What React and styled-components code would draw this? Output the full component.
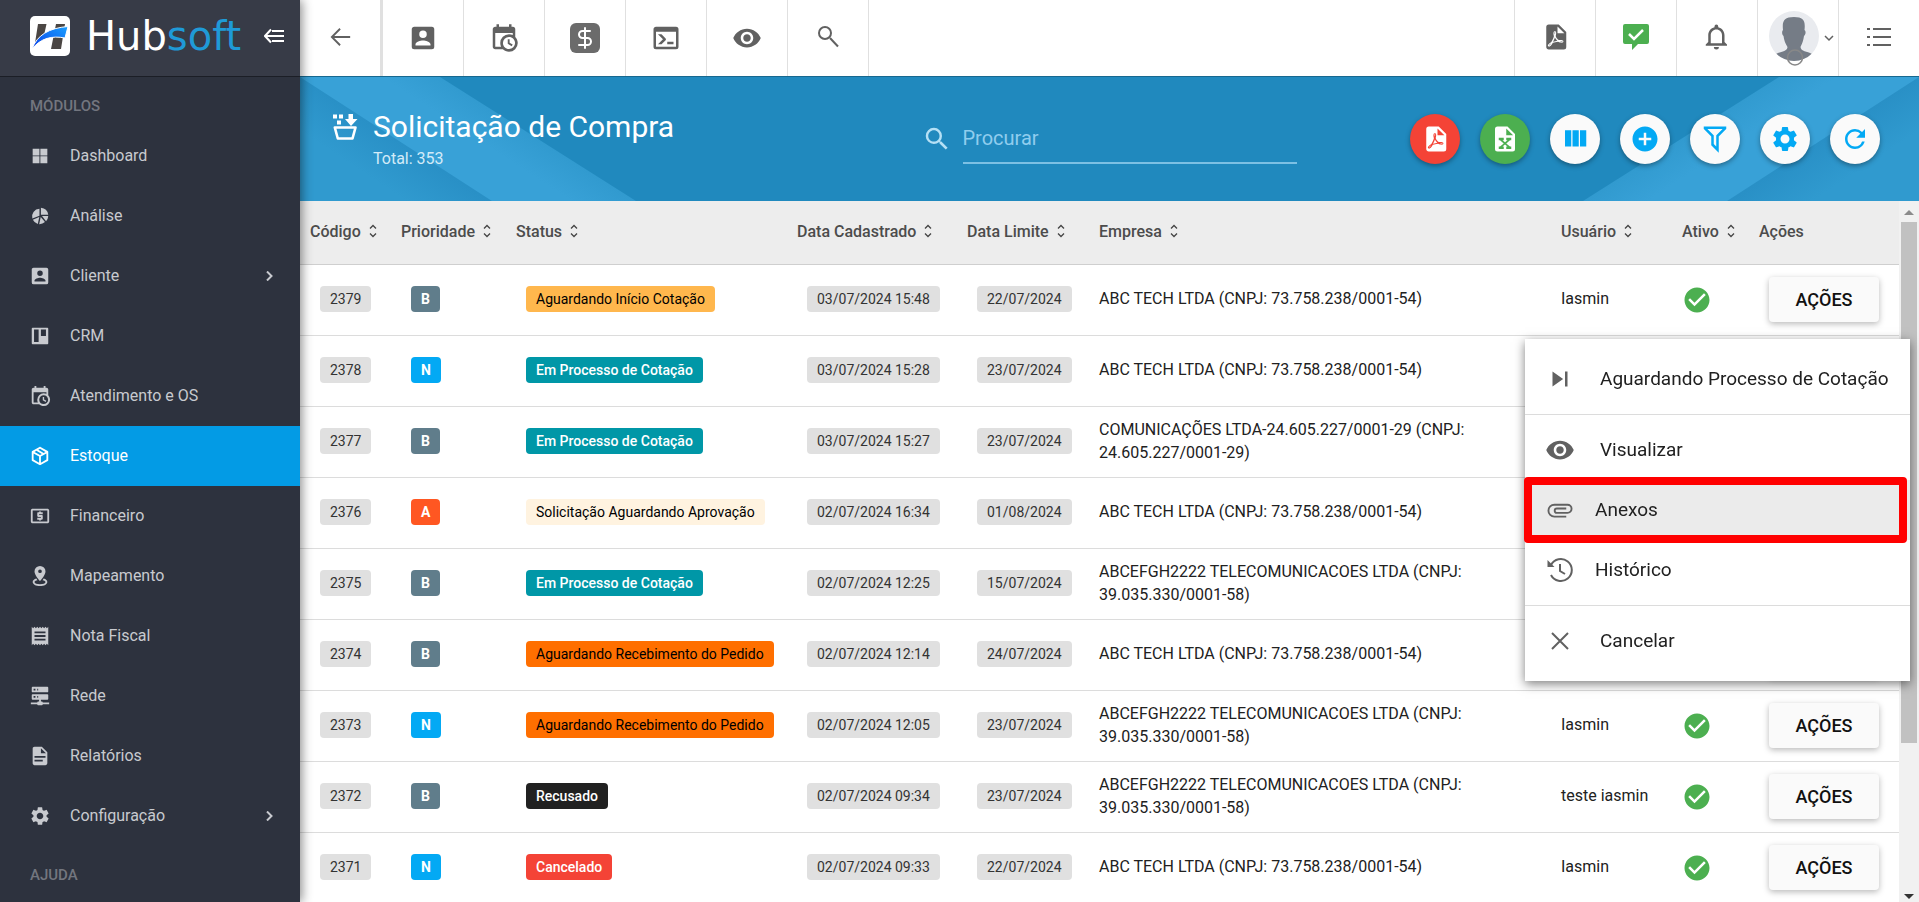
import React from 'react'
import styled, { createGlobalStyle, css } from 'styled-components'
import { DollarSign } from 'lucide-react'
import {
  MdLocalAtm,
  MdReceipt,
  MdSettings,
  MdVisibility,
  MdAddCircle,
  MdRefresh,
  MdSearch,
  MdSkipNext,
  MdCheckCircle,
} from 'react-icons/md'

const GlobalStyle = createGlobalStyle`
  * { box-sizing: border-box; }
  body {
    margin: 0;
    font-family: Roboto, "Noto Sans", sans-serif;
    font-size: 16px;
    color: #212121;
    background: #fff;
  }
  button, input { font-family: inherit; }
  svg { display: block; flex: none; }
`

/* icons */

const paths = {
  account:
    'M6,17C6,15 10,13.9 12,13.9C14,13.9 18,15 18,17V18H6M15,9A3,3 0 0,1 12,12A3,3 0 0,1 9,9A3,3 0 0,1 12,6A3,3 0 0,1 15,9M3,5V19A2,2 0 0,0 5,21H19A2,2 0 0,0 21,19V5A2,2 0 0,0 19,3H5C3.89,3 3,3.9 3,5Z',
  grid: 'M4,4H11.4V11.4H4ZM12.4,4H20V11.4H12.4ZM4,12.4H11.4V20H4ZM12.4,12.4H20V20H12.4Z',
  pie: 'M13,3A9,9 0 0,1 21,10.5H13ZM21,12A9,9 0 0,1 18.6,17.6L14.2,12ZM11.4,4.2V11.6L3.6,14.8A8.4,8.4 0 0,1 11.4,4.2ZM4.2,16L11.2,13L9.6,20.6A9,9 0 0,1 4.2,16ZM12.8,13L17.4,18.6A9,9 0 0,1 11.1,20.9Z',
  board:
    'M4,3H20A1,1 0 0,1 21,4V20A1,1 0 0,1 20,21H4A1,1 0 0,1 3,20V4A1,1 0 0,1 4,3M5.5,5V18.5H10.5V5H5.5M13,5V12H18.5V5H13Z',
  calendar:
    'M15,13H16.5V15.82L18.94,17.23L18.19,18.53L15,16.69V13M19,8H5V19H9.67C9.24,18.09 9,17.07 9,16A7,7 0 0,1 16,9C17.07,9 18.09,9.24 19,9.67V8M5,21C3.89,21 3,20.1 3,19V5C3,3.89 3.89,3 5,3H6V1H8V3H16V1H18V3H19A2,2 0 0,1 21,5V11.1C22.24,12.36 23,14.09 23,16A7,7 0 0,1 16,23C14.09,23 12.36,22.24 11.1,21H5M16,11.15A4.85,4.85 0 0,0 11.15,16C11.15,18.68 13.32,20.85 16,20.85A4.85,4.85 0 0,0 20.85,16C20.85,13.32 18.68,11.15 16,11.15Z',
  box: 'M21,16.5C21,16.88 20.79,17.21 20.47,17.38L12.57,21.82C12.41,21.94 12.21,22 12,22C11.79,22 11.59,21.94 11.43,21.82L3.53,17.38C3.21,17.21 3,16.88 3,16.5V7.5C3,7.12 3.21,6.79 3.53,6.62L11.43,2.18C11.59,2.06 11.79,2 12,2C12.21,2 12.41,2.06 12.57,2.18L20.47,6.62C20.79,6.79 21,7.12 21,7.5V16.5M12,4.15L10.11,5.22L16,8.61L17.96,7.5L12,4.15M6.04,7.5L12,10.85L13.96,9.75L8.08,6.35L6.04,7.5M5,15.91L11,19.29V12.58L5,9.21V15.91M19,15.91V9.21L13,12.58V19.29L19,15.91Z',
  marker:
    'M12,1A6,6 0 0,1 18,7C18,11 12,17.5 12,17.5C12,17.5 6,11 6,7A6,6 0 0,1 12,1M12,4.8A2,2 0 0,0 10,6.8A2,2 0 0,0 12,8.8A2,2 0 0,0 14,6.8A2,2 0 0,0 12,4.8M20,18.5C20,21 16.4,23 12,23C7.6,23 4,21 4,18.5C4,16.8 5.6,15.4 8,14.7L9.2,16.5C7.3,16.9 6,17.7 6,18.5C6,19.9 8.7,21 12,21C15.3,21 18,19.9 18,18.5C18,17.7 16.7,16.9 14.8,16.5L16,14.7C18.4,15.4 20,16.8 20,18.5Z',
  server:
    'M13,18H14A1,1 0 0,1 15,19H22V21H15A1,1 0 0,1 14,22H10A1,1 0 0,1 9,21H2V19H9A1,1 0 0,1 10,18H11V16H4A1,1 0 0,1 3,15V11A1,1 0 0,1 4,10H20A1,1 0 0,1 21,11V15A1,1 0 0,1 20,16H13V18M4,2H20A1,1 0 0,1 21,3V7A1,1 0 0,1 20,8H4A1,1 0 0,1 3,7V3A1,1 0 0,1 4,2M9,6H10V4H9V6M9,14H10V12H9V14M5,4V6H7V4H5M5,12V14H7V12H5Z',
  doc: 'M13,9H18.5L13,3.5V9M6,2H14L20,8V20A2,2 0 0,1 18,22H6C4.89,22 4,21.1 4,20V4C4,2.89 4.89,2 6,2M15,18V16H6V18H15M18,14V12H6V14H18Z',
  pdf: 'M14,9H19.5L14,3.5V9M7,2H15L21,8V20A2,2 0 0,1 19,22H7C5.89,22 5,21.1 5,20V4A2,2 0 0,1 7,2M11.93,12.44C12.34,13.34 12.86,14.08 13.46,14.59L13.87,14.91C13,15.07 11.8,15.35 10.53,15.84V15.84L10.42,15.88L10.92,14.84C11.37,13.97 11.7,13.18 11.93,12.44M18.41,16.25C18.59,16.07 18.68,15.84 18.69,15.59C18.72,15.39 18.67,15.2 18.57,15.04C18.28,14.57 17.53,14.35 16.29,14.35L15,14.42L14.13,13.84C13.5,13.32 12.93,12.41 12.53,11.28L12.57,11.14C12.9,9.81 13.21,8.2 12.55,7.54C12.39,7.38 12.17,7.3 11.94,7.3H11.7C11.33,7.3 11,7.69 10.91,8.07C10.54,9.4 10.76,10.13 11.13,11.34V11.35C10.88,12.23 10.56,13.25 10.05,14.28L9.09,16.08L8.2,16.57C7,17.32 6.43,18.16 6.32,18.69C6.28,18.88 6.3,19.05 6.37,19.23L6.4,19.28L6.88,19.59L7.32,19.7C8.13,19.7 9.05,18.75 10.29,16.63L10.47,16.56C11.5,16.23 12.78,16 14.5,15.81C15.53,16.32 16.74,16.55 17.5,16.55C17.94,16.55 18.24,16.44 18.41,16.25M18,15.54L18.09,15.65C18.08,15.75 18.05,15.76 18,15.78H17.96L17.77,15.8C17.31,15.8 16.6,15.61 15.87,15.29C15.96,15.19 16,15.19 16.1,15.19C17.5,15.19 17.9,15.44 18,15.54M8.83,17C8.18,18.19 7.59,18.85 7.14,19C7.19,18.62 7.64,17.96 8.35,17.31L8.83,17M11.85,10.09C11.62,9.19 11.61,8.46 11.78,8.04L11.85,7.92L12,7.97C12.17,8.21 12.19,8.53 12.09,9.07L12.06,9.23L11.9,10.05L11.85,10.09Z',
  excel:
    'M6,2H14L20,8V20A2,2 0 0,1 18,22H6A2,2 0 0,1 4,20V4A2,2 0 0,1 6,2M13,3.5V9H18.5L13,3.5M17,11H13V13H14L12,14.67L10,13H11V11H7V13H8L11,15.5L8,18H7V20H11V18H10L12,16.33L14,18H13V20H17V18H16L13,15.5L16,13H17V11Z',
  columns: 'M16,5V18H21V5M4,18H9V5H4M10,18H15V5H10V18Z',
  filter:
    'M3,2H21V4H20.92L15,9.92V22.91L9,16.91V9.91L3.09,4H3V2M11,16.08L13,18.08V9H13.09L18.09,4H5.92L10.92,9H11V16.08Z',
  console:
    'M20,19V7H4V19H20M20,3A2,2 0 0,1 22,5V19A2,2 0 0,1 20,21H4A2,2 0 0,1 2,19V5C2,3.89 2.9,3 4,3H20M13,17V15H18V17H13M9.58,13L5.57,9H8.4L11.7,12.3C12.09,12.69 12.09,13.33 11.7,13.72L8.42,17H5.59L9.58,13Z',
  bell: 'M16,17H7V10.5C7,8 9,6 11.5,6C14,6 16,8 16,10.5M18,16V10.5C18,7.43 15.86,4.86 13,4.18V3.5A1.5,1.5 0 0,0 11.5,2A1.5,1.5 0 0,0 10,3.5V4.18C7.13,4.86 5,7.43 5,10.5V16L3,18V19H20V18M11.5,22A2,2 0 0,0 13.5,20H9.5A2,2 0 0,0 11.5,22Z',
  clip: 'M7.5,18A5.5,5.5 0 0,1 2,12.5A5.5,5.5 0 0,1 7.5,7H18A4,4 0 0,1 22,11A4,4 0 0,1 18,15H9.5A2.5,2.5 0 0,1 7,12.5A2.5,2.5 0 0,1 9.5,10H17V11.5H9.5A1,1 0 0,0 8.5,12.5A1,1 0 0,0 9.5,13.5H18A2.5,2.5 0 0,0 20.5,11A2.5,2.5 0 0,0 18,8.5H7.5A4,4 0 0,0 3.5,12.5A4,4 0 0,0 7.5,16.5H17V18H7.5Z',
}

const Icon = ({ name, size = 22 }) => (
  <svg width={size} height={size} viewBox="0 0 24 24" fill="currentColor" fillRule="evenodd" aria-hidden="true">
    <path d={paths[name]} />
  </svg>
)

const Line = ({ d, size = 24, w = 2, box = 24, children }) => (
  <svg width={size} height={size} viewBox={`0 0 ${box} ${box}`} fill="none" stroke="currentColor" strokeWidth={w} aria-hidden="true">
    <path d={d} />
    {children}
  </svg>
)

const SortIcon = () => (
  <svg width="8" height="14" viewBox="0 0 8 14" fill="none" stroke="#444" strokeWidth="1.3" aria-hidden="true">
    <path d="M1 4.5L4 1.5L7 4.5M1 9.5L4 12.5L7 9.5" />
  </svg>
)

const LogoMark = () => (
  <svg width="40" height="40" viewBox="0 0 40 40" aria-hidden="true">
    <defs>
      <linearGradient id="swoosh" x1="0" y1="1" x2="1" y2="0">
        <stop offset="0" stopColor="#0a3fe8" />
        <stop offset="1" stopColor="#1aa0ff" />
      </linearGradient>
    </defs>
    <rect width="40" height="40" rx="5" fill="#fff" />
    <path d="M8 8H16.500L13 24L5 27ZM26 8H35L31 33H21Z" fill="#4b4643" />
    <path d="M2 33C7 19 19 12 38 10.500L35 22C22 19.500 11 22 2 33Z" fill="url(#swoosh)" stroke="#fff" strokeWidth="1" />
  </svg>
)

const BasketIcon = () => (
  <svg width="25" height="26" viewBox="0 0 25 26" fill="#fff" aria-hidden="true">
    <path d="M0 0.500H4V4.500H0ZM6 0.500H10V4.500H6ZM4 6.500H8V10.500H4ZM15.500 0H20V5H24.500L18 12L12 5H15.500Z" />
    <path d="M1.800 13.500H22.500L19.500 24.500H4.800Z" fill="none" stroke="#fff" strokeWidth="2.600" strokeLinejoin="round" />
  </svg>
)

const AvatarPicture = () => (
  <svg width="50" height="55" viewBox="0 0 50 55" aria-hidden="true">
    <clipPath id="face"><circle cx="25" cy="25" r="25" /></clipPath>
    <g clipPath="url(#face)">
      <rect width="50" height="50" fill="#e9ebef" />
      <path d="M7 43C12 40 18 41 18.500 36C16.500 33 15 29 14.500 25C12.500 23 13 20 14 19C13 10 15 6 25 6C35 6 36.500 10 35.500 19C37 20 37 23 35 25C34.500 29 33 33 31.500 36C32 41 38 40 43 43L38 53H12Z" fill="#757c86" />
    </g>
    <path d="M19 50H33A7 7 0 0 1 19 50Z" fill="#fff" />
    <circle cx="26" cy="46.500" r="7.500" fill="none" stroke="#888" strokeWidth="1.500" />
  </svg>
)

/* layout */

const Page = styled.div`
  display: grid;
  grid-template-columns: 300px minmax(0, 1fr);
  height: 100vh;
  overflow: hidden;
`

const Sidebar = styled.aside`
  z-index: 2;
  background: #2d323e;
  color: #c8cacf;
  overflow: hidden;
  box-shadow: 2px 0 10px rgba(0, 0, 0, 0.45);
`

const Brand = styled.div`
  display: flex;
  align-items: center;
  height: 77px;
  padding: 0 16px 4px 30px;
  background: #373b47;
  border-bottom: 1px solid #1b1e26;
  color: #fff;
`

const BrandName = styled.span`
  flex: 1;
  margin-left: 16px;
  font: 40px/40px "DejaVu Sans", sans-serif;

  span { color: #1f9ad7; }
`

const PlainButton = styled.button`
  display: flex;
  padding: 0;
  border: 0;
  background: none;
  color: inherit;
  cursor: pointer;
`

const NavTitle = styled.h2`
  margin: 0;
  padding: 19px 30px 10px;
  font-size: 15px;
  line-height: 20px;
  font-weight: 500;
  color: #73767f;
`

const NavItem = styled.a`
  display: flex;
  align-items: center;
  height: 60px;
  padding: 0 25px 0 29px;
  color: ${(p) => (p.$active ? '#fff' : 'inherit')};
  background: ${(p) => (p.$active ? '#039be5' : 'transparent')};
  text-decoration: none;

  span {
    flex: 1;
    margin-left: 19px;
    padding-bottom: 2px;
  }
`

const Main = styled.main`
  display: flex;
  flex-direction: column;
  min-width: 0;
  min-height: 0;
`

const Topbar = styled.header`
  display: flex;
  justify-content: space-between;
  flex: none;
  height: 76px;
  background: #fff;
  color: #616161;
`

const Tools = styled.div`
  display: flex;
`

const Tool = styled.button`
  display: flex;
  align-items: center;
  justify-content: center;
  gap: 5px;
  width: 81px;
  padding: 0;
  border: solid #e0e0e0;
  border-width: 0 1px 0 0;
  background: none;
  color: ${(p) => p.$color || 'inherit'};
`

const BackTool = styled(Tool)`
  width: 83px;
  padding: 0 0 2px 2px;
  border-right-width: 3px;
`

const EndTool = styled(Tool)`
  padding-bottom: 2px;
  border-width: 0 0 0 1px;
`

const UserTool = styled(EndTool)`
  padding: 0 0 0 6px;
`

const MoneyBox = styled.span`
  display: flex;
  padding: 3px;
  border-radius: 6px;
  background: #6b6b6b;
  color: #fff;
`

const Banner = styled.section`
  position: relative;
  display: grid;
  grid-template-columns: 1fr 380px 1fr;
  align-items: center;
  flex: none;
  height: 125px;
  padding: 0 39px 0 33px;
  background: #2089be;
  border-top: 1px solid #17688f;
  color: #fff;
`

const Rays = styled.svg`
  position: absolute;
  top: 0;
  ${(p) => (p.$flip ? css`right: 0; transform: scaleX(-1);` : css`left: 0;`)}
`

const Heading = styled.div`
  position: relative;
  display: grid;
  grid-template-columns: 25px auto;
  column-gap: 15px;
  justify-content: start;
  align-items: center;
  padding-top: 2px;

  h1 {
    margin: 0;
    font-size: 30px;
    line-height: 36px;
    font-weight: 400;
  }
  p {
    grid-column: 2;
    margin: 0;
    padding-top: 2px;
    line-height: 24px;
    color: #d3ebf8;
  }
`

const Search = styled.label`
  position: relative;
  display: flex;
  align-items: center;
  gap: 11px;
  margin-left: 5px;
  color: #b5e0f5;

  input {
    flex: 1;
    min-width: 0;
    height: 50px;
    padding: 0;
    border: 0;
    border-bottom: 2px solid #7cc0e4;
    background: none;
    color: #fff;
    font-size: 20px;
    outline: 0;
  }
  input::placeholder { color: #90cdee; }
`

const Actions = styled.div`
  position: relative;
  display: flex;
  justify-content: flex-end;
  gap: 20px;
`

const RoundButton = styled.button`
  display: flex;
  align-items: center;
  justify-content: center;
  width: 50px;
  height: 50px;
  padding: 0;
  border: 0;
  border-radius: 50%;
  background: ${(p) => p.$bg || '#fafafa'};
  color: ${(p) => (p.$bg ? '#fff' : '#03a9f4')};
  box-shadow: 0 2px 5px rgba(0, 0, 0, 0.35);
`

const ListArea = styled.section`
  display: flex;
  flex: 1;
  min-height: 0;
`

const TableBox = styled.div`
  flex: 1;
  min-width: 0;
  overflow: hidden;
`

const Table = styled.table`
  width: 100%;
  table-layout: fixed;
  border-collapse: collapse;

  th {
    height: 63px;
    padding: 0 0 2px 10px;
    background: #ededed;
    border-bottom: 1px solid #cfcfcf;
    color: #4c4c4c;
    font-weight: 500;
    text-align: left;
    white-space: nowrap;
  }
  td {
    height: 71px;
    padding: 0 10px 2px;
    border-bottom: 1px solid #dcdcdc;
    line-height: 23px;
  }
`

const Col = styled.col`
  width: ${(p) => p.$w};
`

const Sort = styled.span`
  display: inline-flex;
  align-items: center;
  gap: 8px;
`

const Badge = styled.span`
  display: inline-block;
  margin-left: 10px;
  padding: 0 10px;
  border-radius: 4px;
  font-size: 14px;
  line-height: 26px;
  font-weight: ${(p) => p.$weight || 400};
  white-space: nowrap;
  vertical-align: middle;
  background: ${(p) => p.$bg || '#e0e0e0'};
  color: ${(p) => p.$color || '#333'};
`

const ActiveMark = styled.span`
  display: block;
  padding-top: 2px;
  color: #4caf50;
`

const RowButton = styled.button`
  display: block;
  width: 110px;
  height: 45px;
  margin: 2px 0 0 10px;
  padding: 0;
  border: 0;
  border-radius: 4px;
  background: #fafafa;
  color: #111;
  font-size: 18px;
  font-weight: 500;
  box-shadow: 0 2px 6px rgba(0, 0, 0, 0.28);
`

const Scrollbar = styled.div`
  display: flex;
  flex-direction: column;
  align-items: center;
  flex: none;
  width: 20px;
  background: #f1f1f1;
`

const Thumb = styled.div`
  flex: 522;
  width: 16px;
  background: #c1c1c1;
`

const Track = styled.div`
  flex: 138;
`

const Arrow = styled.span`
  flex: none;
  height: 21px;
  padding-top: ${(p) => (p.$down ? '13px' : '9px')};

  &::before {
    content: '';
    display: block;
    border: solid transparent;
    border-width: ${(p) => (p.$down ? '5px 5px 0' : '0 5px 5px')};
    ${(p) => (p.$down ? 'border-top-color: #333;' : 'border-bottom-color: #8b8b8b;')}
  }
`

const Menu = styled.div`
  position: fixed;
  z-index: 3;
  top: 339px;
  right: 9px;
  width: 385px;
  padding: 10px 0;
  background: #fff;
  box-shadow: 0 3px 10px rgba(0, 0, 0, 0.5);

  hr {
    height: 1px;
    margin: 5px 0;
    border: 0;
    background: #dcdcdc;
  }
`

const MenuItem = styled.button`
  position: relative;
  display: flex;
  align-items: center;
  gap: ${(p) => (p.$tight ? '20px' : '25px')};
  width: 100%;
  height: 60px;
  padding: 0 20px;
  border: 0;
  background: ${(p) => (p.$marked ? '#ebebeb' : 'none')};
  color: #616161;
  font-size: 19px;
  text-align: left;

  span {
    padding-bottom: 2px;
    color: #212121;
    white-space: nowrap;
  }

  ${(p) =>
    p.$marked &&
    css`
      &::after {
        content: '';
        position: absolute;
        inset: -3px 3px -3px -1px;
        border: 8px solid #f00;
        border-radius: 4px;
      }
    `}
`

/* data */

const modules = [
  { label: 'Dashboard', icon: <Icon name="grid" /> },
  { label: 'Análise', icon: <Icon name="pie" /> },
  { label: 'Cliente', icon: <Icon name="account" />, more: true },
  { label: 'CRM', icon: <Icon name="board" /> },
  { label: 'Atendimento e OS', icon: <Icon name="calendar" /> },
  { label: 'Estoque', icon: <Icon name="box" />, active: true },
  { label: 'Financeiro', icon: <MdLocalAtm size={22} /> },
  { label: 'Mapeamento', icon: <Icon name="marker" /> },
  { label: 'Nota Fiscal', icon: <MdReceipt size={22} /> },
  { label: 'Rede', icon: <Icon name="server" /> },
  { label: 'Relatórios', icon: <Icon name="doc" /> },
  { label: 'Configuração', icon: <MdSettings size={22} />, more: true },
]

const priority = {
  B: '#607d8b',
  N: '#03a9f4',
  A: '#ff5722',
}

const status = {
  inicio: { label: 'Aguardando Início Cotação', bg: '#ffb74d', color: '#000' },
  processo: { label: 'Em Processo de Cotação', bg: '#0097a7', color: '#fff', weight: 500 },
  aprovacao: { label: 'Solicitação Aguardando Aprovação', bg: '#fff3e0', color: '#000' },
  recebimento: { label: 'Aguardando Recebimento do Pedido', bg: '#ff6f00', color: '#000' },
  recusado: { label: 'Recusado', bg: '#212121', color: '#fff', weight: 500 },
  cancelado: { label: 'Cancelado', bg: '#f44336', color: '#fff', weight: 500 },
}

const abc = 'ABC TECH LTDA (CNPJ: 73.758.238/0001-54)'
const tele = 'ABCEFGH2222 TELECOMUNICACOES LTDA (CNPJ: 39.035.330/0001-58)'
const com = 'COMUNICAÇÕES LTDA-24.605.227/0001-29 (CNPJ: 24.605.227/0001-29)'

const rows = [
  [2379, 'B', 'inicio', '03/07/2024 15:48', '22/07/2024', abc, 'Iasmin'],
  [2378, 'N', 'processo', '03/07/2024 15:28', '23/07/2024', abc, ''],
  [2377, 'B', 'processo', '03/07/2024 15:27', '23/07/2024', com, ''],
  [2376, 'A', 'aprovacao', '02/07/2024 16:34', '01/08/2024', abc, ''],
  [2375, 'B', 'processo', '02/07/2024 12:25', '15/07/2024', tele, ''],
  [2374, 'B', 'recebimento', '02/07/2024 12:14', '24/07/2024', abc, ''],
  [2373, 'N', 'recebimento', '02/07/2024 12:05', '23/07/2024', tele, 'Iasmin'],
  [2372, 'B', 'recusado', '02/07/2024 09:34', '23/07/2024', tele, 'teste iasmin'],
  [2371, 'N', 'cancelado', '02/07/2024 09:33', '22/07/2024', abc, 'Iasmin'],
]

const columns = [
  ['Código', '91px'],
  ['Prioridade', '115px'],
  ['Status', '281px'],
  ['Data Cadastrado', '170px'],
  ['Data Limite', '132px'],
  ['Empresa', 'auto'],
  ['Usuário', '121px'],
  ['Ativo', '77px'],
  ['Ações', '150px'],
]

const DiagonalRays = ({ flip }) => (
  <Rays $flip={flip} width="340" height="124" viewBox="0 0 340 124" aria-hidden="true">
    <defs>
      <linearGradient id={flip ? 'shadeR' : 'shadeL'} gradientUnits="userSpaceOnUse" x1="95" y1="62" x2="70" y2="100">
        <stop offset="0" stopColor="#2990c6" />
        <stop offset="1" stopColor="#309acf" />
      </linearGradient>
      <linearGradient id={flip ? 'bandR' : 'bandL'} gradientUnits="userSpaceOnUse" x1="24" y1="-38" x2="43" y2="-67">
        <stop offset="0" stopColor="#38a1d7" />
        <stop offset="1" stopColor="#319acf" />
      </linearGradient>
    </defs>
    <path d="M0 0H140L336 124H0Z" fill={`url(#${flip ? 'bandR' : 'bandL'})`} />
    <path d="M0 0L192 124H0Z" fill={`url(#${flip ? 'shadeR' : 'shadeL'})`} />
  </Rays>
)

const Side = () => (
  <Sidebar>
    <Brand>
      <LogoMark />
      <BrandName>Hub<span>soft</span></BrandName>
      <PlainButton aria-label="Recolher menu">
        <Line box={20} size={20} w={2} d="M7 3.500L1 10L7 16.500M2 10H20M8 5H20M8 15H20" />
      </PlainButton>
    </Brand>
    <nav>
      <NavTitle>MÓDULOS</NavTitle>
      {modules.map((m) => (
        <NavItem key={m.label} href="#" $active={m.active}>
          {m.icon}
          <span>{m.label}</span>
          {m.more && <Line box={10} size={10} w={2} d="M2 0.500L6.500 5L2 9.500" />}
        </NavItem>
      ))}
      <NavTitle>AJUDA</NavTitle>
    </nav>
  </Sidebar>
)

const Header = () => (
  <Topbar>
    <Tools>
      <BackTool aria-label="Voltar"><Line w={2} size={22} d="M11 3L2 12L11 21M2 12H22" /></BackTool>
      <Tool aria-label="Clientes"><Icon name="account" size={30} /></Tool>
      <Tool aria-label="Agenda"><Icon name="calendar" size={30} /></Tool>
      <Tool aria-label="Financeiro"><MoneyBox><DollarSign size={24} strokeWidth={2} /></MoneyBox></Tool>
      <Tool aria-label="Console"><Icon name="console" size={30} /></Tool>
      <Tool aria-label="Visualizar"><MdVisibility size={30} /></Tool>
      <Tool aria-label="Pesquisar">
        <Line size={24} w={2} d="M14 12L22 20.500"><circle cx="9" cy="7" r="6" /></Line>
      </Tool>
    </Tools>
    <Tools>
      <EndTool aria-label="PDF"><Icon name="pdf" size={30} /></EndTool>
      <EndTool $color="#4caf50" aria-label="Mensagens">
        <svg width="26" height="26" viewBox="0 0 26 26" aria-hidden="true">
          <path d="M2 0H24A2 2 0 0 1 26 2V18A2 2 0 0 1 24 20H15L9 26V20H2A2 2 0 0 1 0 18V2A2 2 0 0 1 2 0Z" fill="currentColor" />
          <path d="M6 10L11 15L20 6" fill="none" stroke="#fff" strokeWidth="2.500" />
        </svg>
      </EndTool>
      <EndTool aria-label="Notificações"><Icon name="bell" size={30} /></EndTool>
      <UserTool aria-label="Perfil">
        <AvatarPicture />
        <Line box={10} size={10} w={1.5} d="M1 3L5 7L9 3" />
      </UserTool>
      <EndTool aria-label="Menu">
        <Line size={24} w={2} d="M6 4H24M6 12H24M6 20H24M0 4H3M0 12H3M0 20H3" />
      </EndTool>
    </Tools>
  </Topbar>
)

const PageBanner = () => (
  <Banner>
    <DiagonalRays />
    <DiagonalRays flip />
    <Heading>
      <BasketIcon />
      <h1>Solicitação de Compra</h1>
      <p>Total: 353</p>
    </Heading>
    <Search>
      <MdSearch size={30} />
      <input type="text" placeholder="Procurar" aria-label="Procurar" />
    </Search>
    <Actions>
      <RoundButton $bg="#f44336" aria-label="Exportar PDF"><Icon name="pdf" size={30} /></RoundButton>
      <RoundButton $bg="#4caf50" aria-label="Exportar Excel"><Icon name="excel" size={30} /></RoundButton>
      <RoundButton aria-label="Colunas"><Icon name="columns" size={30} /></RoundButton>
      <RoundButton aria-label="Adicionar"><MdAddCircle size={30} /></RoundButton>
      <RoundButton aria-label="Filtrar"><Icon name="filter" size={30} /></RoundButton>
      <RoundButton aria-label="Configurar"><MdSettings size={30} /></RoundButton>
      <RoundButton aria-label="Atualizar"><MdRefresh size={30} /></RoundButton>
    </Actions>
  </Banner>
)

const Requests = () => (
  <Table>
    <colgroup>
      {columns.map(([label, w]) => <Col key={label} $w={w} />)}
    </colgroup>
    <thead>
      <tr>
        {columns.map(([label]) => (
          <th key={label}>
            <Sort>
              {label}
              {label !== 'Ações' && <SortIcon />}
            </Sort>
          </th>
        ))}
      </tr>
    </thead>
    <tbody>
      {rows.map(([code, prio, st, created, limit, company, user]) => (
        <tr key={code}>
          <td><Badge>{code}</Badge></td>
          <td><Badge $bg={priority[prio]} $color="#fff" $weight={700}>{prio}</Badge></td>
          <td>
            <Badge $bg={status[st].bg} $color={status[st].color} $weight={status[st].weight}>
              {status[st].label}
            </Badge>
          </td>
          <td><Badge>{created}</Badge></td>
          <td><Badge>{limit}</Badge></td>
          <td>{company}</td>
          <td>{user}</td>
          <td><ActiveMark><MdCheckCircle size={30} /></ActiveMark></td>
          <td><RowButton>AÇÕES</RowButton></td>
        </tr>
      ))}
    </tbody>
  </Table>
)

const RowMenu = () => (
  <Menu>
    <MenuItem><MdSkipNext size={30} /><span>Aguardando Processo de Cotação</span></MenuItem>
    <hr />
    <MenuItem><MdVisibility size={30} /><span>Visualizar</span></MenuItem>
    <MenuItem $tight $marked><Icon name="clip" size={30} /><span>Anexos</span></MenuItem>
    <MenuItem $tight>
      <Line box={30} size={30} w={2} d="M6 10A11 11 0 1 1 6 20M15 9V16L20 19">
        <path d="M2.500 5V12H9.500Z" fill="currentColor" stroke="none" />
      </Line>
      <span>Histórico</span>
    </MenuItem>
    <hr />
    <MenuItem><Line box={30} size={30} w={2} d="M7 7L23 23M23 7L7 23" /><span>Cancelar</span></MenuItem>
  </Menu>
)

const App = () => (
  <>
    <GlobalStyle />
    <Page>
      <Side />
      <Main>
        <Header />
        <PageBanner />
        <ListArea>
          <TableBox><Requests /></TableBox>
          <Scrollbar>
            <Arrow />
            <Thumb />
            <Track />
            <Arrow $down />
          </Scrollbar>
        </ListArea>
      </Main>
    </Page>
    <RowMenu />
  </>
)

export default App
